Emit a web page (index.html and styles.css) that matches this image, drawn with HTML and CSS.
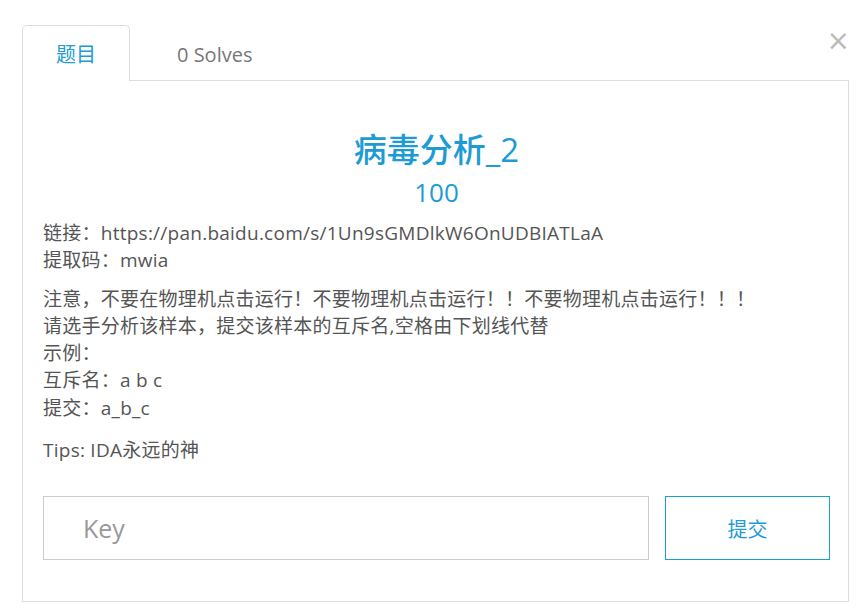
FILE: index.html
```html
<!DOCTYPE html>
<html>
<head>
    <title>病毒分析_2</title>
    <link rel="stylesheet" href="styles.css">
</head>
<body>
    <div class="modal">
        <span class="close">&times;</span>
        <ul class="tabs">
            <li class="tab active">题目</li>
            <li class="tab">0 Solves</li>
        </ul>
        <div class="tab-content">
            <h2 class="challenge-name">病毒分析_2</h2>
            <h3 class="challenge-value">100</h3>
            <div class="challenge-desc">
                <p>链接：https://pan.baidu.com/s/1Un9sGMDlkW6OnUDBIATLaA<br>提取码：mwia</p>
                <p>注意，不要在物理机点击运行！不要物理机点击运行！！不要物理机点击运行！！！<br>请选手分析该样本，提交该样本的互斥名,空格由下划线代替<br>示例：<br>互斥名：a b c<br>提交：a_b_c</p>
                <p class="tips">Tips: IDA永远的神</p>
            </div>
            <form class="submit-row">
                <input type="text" class="key-input" placeholder="Key">
                <button type="submit" class="submit-btn">提交</button>
            </form>
        </div>
    </div>
</body>
</html>
```

FILE: styles.css
```css
body {
    margin: 0;
    font-family: "Open Sans", "Noto Sans CJK SC", sans-serif;
    color: #555;
    background-color: #fff;
}

.modal {
    position: relative;
    width: 827px;
    margin: 25px 0 0 22px;
}

.close {
    position: absolute;
    right: -1px;
    top: 2px;
    font-size: 28px;
    line-height: 28px;
    color: #bbb;
    font-family: "DejaVu Sans", sans-serif;
}

.tabs {
    display: flex;
    list-style: none;
    margin: 0;
    padding: 0;
    border-bottom: 1px solid #ddd;
}

.tab {
    height: 54px;
    line-height: 57px;
    padding: 0 46px;
    font-size: 20px;
    color: #777;
    border: 1px solid transparent;
    border-bottom: none;
    margin-bottom: -1px;
}

.tab.active {
    width: 106px;
    padding: 0;
    text-align: center;
    color: #1d9bd5;
    border-color: #ddd;
    border-radius: 5px 5px 0 0;
    background-color: #fff;
    height: 55px;
}

.tab-content {
    border: 1px solid #ddd;
    border-top: none;
    padding: 47px 18px 41px 20px;
}

.challenge-name {
    margin: 0;
    text-align: center;
    font-size: 33px;
    font-weight: 500;
    line-height: 44px;
    color: #1d9bd5;
}

.challenge-value {
    margin: 0 0 8px;
    text-align: center;
    font-size: 26px;
    font-weight: 500;
    line-height: 40px;
    color: #1d9bd5;
}

.challenge-desc {
    font-size: 19px;
    line-height: 27.3px;
    letter-spacing: 0.25px;
}

.challenge-desc p {
    margin: 0 0 11px;
}

.challenge-desc .tips {
    margin-top: 15px;
}

.submit-row {
    display: flex;
    gap: 16px;
    margin-top: 32px;
}

.key-input {
    flex: 1;
    height: 64px;
    box-sizing: border-box;
    border: 1px solid #ccc;
    padding: 0 39px;
    font-family: "Open Sans", "Noto Sans CJK SC", sans-serif;
    font-size: 25px;
    color: #555;
    outline: none;
}

.key-input::placeholder {
    color: #999;
}

.submit-btn {
    width: 165px;
    height: 64px;
    box-sizing: border-box;
    background-color: #fff;
    border: 1px solid #1d9bd5;
    color: #1d9bd5;
    font-family: "Noto Sans CJK SC", sans-serif;
    font-size: 20px;
    cursor: pointer;
}
```
